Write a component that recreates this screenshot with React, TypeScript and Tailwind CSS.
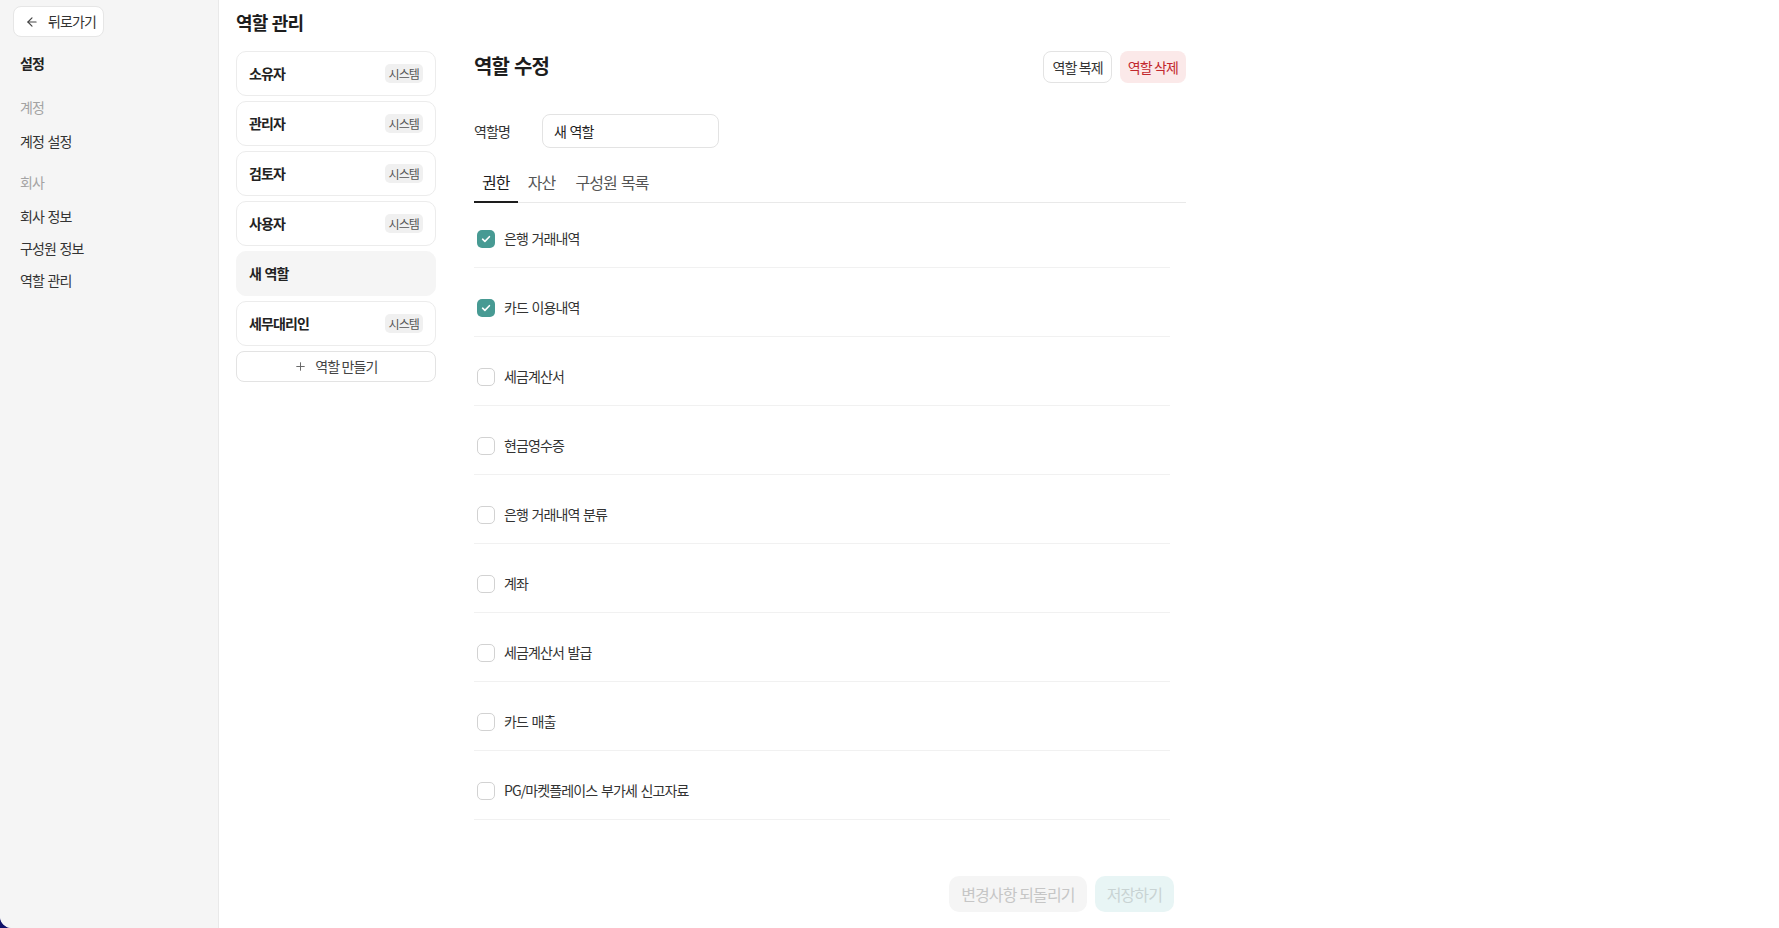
import React from "react";

const FONT = { fontFamily: '"Noto Sans CJK KR", "Noto Sans", sans-serif' };

const roles = [
  { name: "소유자", system: true },
  { name: "관리자", system: true },
  { name: "검토자", system: true },
  { name: "사용자", system: true },
  { name: "새 역할", system: false, selected: true },
  { name: "세무대리인", system: true },
];

const perms = [
  { label: "은행 거래내역", checked: true },
  { label: "카드 이용내역", checked: true },
  { label: "세금계산서", checked: false },
  { label: "현금영수증", checked: false },
  { label: "은행 거래내역 분류", checked: false },
  { label: "계좌", checked: false },
  { label: "세금계산서 발급", checked: false },
  { label: "카드 매출", checked: false },
  { label: "PG/마켓플레이스 부가세 신고자료", checked: false },
];

function Checkbox({ checked }: { checked: boolean }) {
  if (checked) {
    return (
      <span className="flex h-[18px] w-[18px] items-center justify-center rounded-[5px] bg-[#479a93]">
        <svg width="12" height="12" viewBox="0 0 12 12" fill="none">
          <path d="M2.6 6.2 L4.9 8.4 L9.4 3.7" stroke="white" strokeWidth="1.6" strokeLinecap="round" strokeLinejoin="round" />
        </svg>
      </span>
    );
  }
  return <span className="block h-[18px] w-[18px] rounded-[5px] border border-[#d2d2d2] bg-white" />;
}

export default function App() {
  return (
    <div className="h-[928px] w-full bg-[#12126a] tracking-[-0.055em] [word-spacing:0.08em]" style={FONT}>
      <div className="flex h-full w-full overflow-hidden rounded-bl-[12px] bg-white">
        {/* Sidebar */}
        <aside className="flex w-[219px] shrink-0 flex-col border-r border-[#e9e9e9] bg-[#f5f5f5] pl-[13px] pt-[6px]">
          <button className="flex h-[31px] w-[91px] items-center rounded-[8px] border border-[#e6e6e6] bg-white pl-[11px] text-[14px] text-[#333]">
            <svg width="14" height="14" viewBox="0 0 24 24" fill="none" stroke="#444" strokeWidth="2" strokeLinecap="round" strokeLinejoin="round">
              <path d="M19 12H5" />
              <path d="M12 19l-7-7 7-7" />
            </svg>
            <span className="ml-[9px]">뒤로가기</span>
          </button>
          <div className="pl-[7px]">
            <div className="mt-[16px] text-[14px] font-bold leading-[20px] text-[#222]">설정</div>
            <div className="mt-[24px] text-[14px] leading-[20px] text-[#a3a3a3]">계정</div>
            <div className="mt-[14px] text-[14px] leading-[20px] text-[#333]">계정 설정</div>
            <div className="mt-[21px] text-[14px] leading-[20px] text-[#a3a3a3]">회사</div>
            <div className="mt-[14px] text-[14px] leading-[20px] text-[#333]">회사 정보</div>
            <div className="mt-[12px] text-[14px] leading-[20px] text-[#333]">구성원 정보</div>
            <div className="mt-[12px] text-[14px] leading-[20px] text-[#333]">역할 관리</div>
          </div>
        </aside>

        {/* Main */}
        <main className="flex flex-1 flex-col pl-[17px]">
          <h1 className="mt-[10px] text-[18px] font-bold leading-[24px] text-[#1d1d1d]">역할 관리</h1>
          <div className="mt-[17px] flex">
            {/* Role list */}
            <div className="flex w-[200px] shrink-0 flex-col gap-[5px]">
              {roles.map((r) => (
                <div
                  key={r.name}
                  className={
                    r.selected
                      ? "flex h-[45px] items-center justify-between rounded-[10px] border border-[#f5f5f5] bg-[#f5f5f5] px-[12px]"
                      : "flex h-[45px] items-center justify-between rounded-[10px] border border-[#ececec] bg-white px-[12px]"
                  }
                >
                  <span className="text-[14px] font-semibold text-[#222]">{r.name}</span>
                  {r.system && (
                    <span className="rounded-[5px] bg-[#f0f0f0] px-[4px] py-[1px] text-[12px] leading-[17px] text-[#555]">시스템</span>
                  )}
                </div>
              ))}
              <button className="flex h-[31px] items-center justify-center gap-[8px] rounded-[8px] border border-[#e3e3e3] bg-white text-[14px] text-[#444]">
                <svg width="13" height="13" viewBox="0 0 24 24" fill="none" stroke="#666" strokeWidth="1.8" strokeLinecap="round">
                  <path d="M12 5v14" />
                  <path d="M5 12h14" />
                </svg>
                <span>역할 만들기</span>
              </button>
            </div>

            {/* Edit panel */}
            <section className="ml-[38px] flex w-[712px] flex-col">
              <div className="flex h-[32px] items-center justify-between">
                <h2 className="-mt-[2px] text-[20px] font-bold text-[#1d1d1d]">역할 수정</h2>
                <div className="flex gap-[8px]">
                  <button className="h-[32px] rounded-[8px] border border-[#e3e3e3] bg-white px-[8px] text-[14px] text-[#333]">역할 복제</button>
                  <button className="h-[32px] rounded-[8px] bg-[#fbe9e9] px-[8px] text-[14px] text-[#c2272d]">역할 삭제</button>
                </div>
              </div>

              <div className="mt-[31px] flex items-center">
                <span className="w-[68px] text-[14px] text-[#333]">역할명</span>
                <div className="flex h-[34px] w-[177px] items-center rounded-[8px] border border-[#e3e3e3] bg-white px-[11px] text-[14px] text-[#222]">
                  새 역할
                </div>
              </div>

              <div className="mt-[16px] flex h-[39px] border-b border-[#e9e9e9]">
                <div className="-mb-px flex items-center border-b-2 border-[#1d1d1d] px-[8px] pb-[2px] text-[16px] text-[#1d1d1d]">권한</div>
                <div className="flex items-center px-[10px] pb-[2px] text-[16px] text-[#555]">자산</div>
                <div className="flex items-center px-[10px] pb-[2px] text-[16px] text-[#555]">구성원 목록</div>
              </div>

              <div className="mr-[16px] flex flex-col">
                {perms.map((p, i) => (
                  <div
                    key={p.label}
                    className={
                      i === 0
                        ? "flex h-[65px] items-start border-b border-[#f1f1f1] pl-[3px] pt-[27px]"
                        : "flex h-[69px] items-start border-b border-[#f1f1f1] pl-[3px] pt-[31px]"
                    }
                  >
                    <div className="flex h-[18px] items-center gap-[9px]">
                      <Checkbox checked={p.checked} />
                      <span className="-mt-[1px] text-[14px] text-[#333]">{p.label}</span>
                    </div>
                  </div>
                ))}
              </div>

              <div className="mr-[12px] mt-[56px] flex justify-end gap-[8px]">
                <button className="h-[36px] rounded-[10px] bg-[#f5f5f5] px-[12px] text-[16px] text-[#c6c6c6]">변경사항 되돌리기</button>
                <button className="h-[36px] rounded-[10px] bg-[#e8f5f5] px-[12px] text-[16px] text-[#c8d3d3]">저장하기</button>
              </div>
            </section>
          </div>
        </main>
      </div>
    </div>
  );
}
